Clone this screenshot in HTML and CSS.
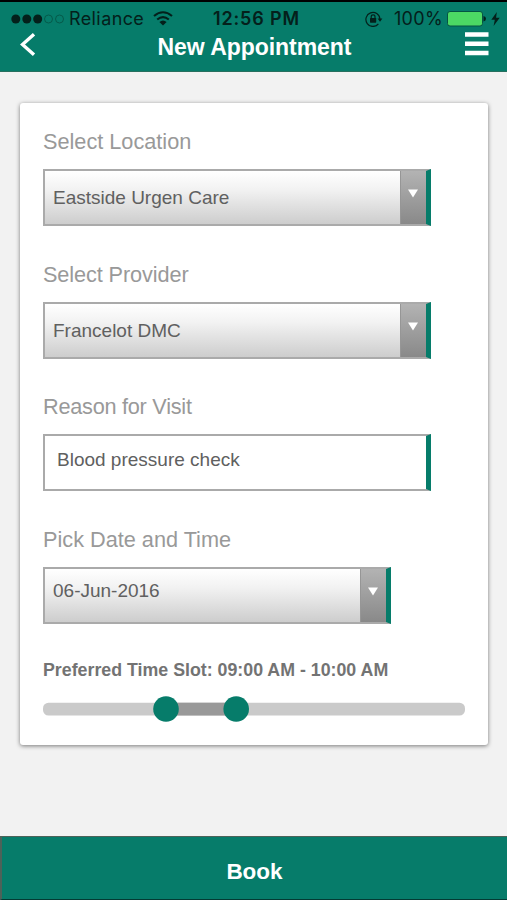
FILE: index.html
```html
<!DOCTYPE html>
<html lang="en">
<head>
<meta charset="utf-8">
<title>New Appointment</title>
<link rel="stylesheet" href="styles.css">
</head>
<body>
<div class="app">
  <header class="header">
    <div class="status">
      <div class="status-left">
        <svg class="signal" width="54" height="12" viewBox="0 0 54 12"><circle cx="4.8" cy="6" r="4.5"/><circle cx="15.8" cy="6" r="4.5"/><circle cx="26.7" cy="6" r="4.5"/><g class="signal-off"><circle cx="37.5" cy="6" r="4"/><circle cx="48.5" cy="6" r="4"/></g></svg>
        <span class="carrier">Reliance</span>
        <svg class="wifi" width="20" height="15" viewBox="0 0 20 15"><g fill="none" stroke="#04201b" stroke-width="2.1"><path d="M1 5Q10-2.5 19 5"/><path d="M4.2 8.5Q10 3.7 15.8 8.5"/></g><path d="M6.4 11Q10 7.8 13.6 11L10 14.5Z" fill="#04201b"/></svg>
      </div>
      <span class="clock">12:56 PM</span>
      <div class="status-right">
        <svg class="lock" width="18" height="16" viewBox="0 0 18 16"><path d="M13.4 12.8A7 7 0 1 1 14.9 8" fill="none" stroke="#04201b" stroke-width="1.2"/><path d="M12.6 7.5H17.4L15 10.8Z"/><rect x="5" y="7" width="6.2" height="4.7" rx=".6"/><path d="M6.2 7.4V5.8a1.9 1.9 0 0 1 3.8 0V7.4" fill="none" stroke="#04201b" stroke-width="1.2"/></svg>
        <span class="percent">100%</span>
        <svg class="battery" width="39" height="16" viewBox="0 0 39 16"><rect x=".5" y=".5" width="35" height="14.5" rx="2.5" fill="#4cd964" stroke="#055443"/><path d="M36.5 5Q39 5.5 39 7.8T36.5 10.5Z"/></svg>
        <svg class="bolt" width="9" height="14" viewBox="0 0 9 14"><path d="M5.8 0L.3 7.8H3.8L2.6 14 8.7 5.8H5.1Z"/></svg>
      </div>
    </div>
    <div class="nav">
      <svg class="back" width="16" height="23" viewBox="0 0 16 23"><path d="M14 1.3L2.5 11.5 14 21.7" fill="none" stroke="#fff" stroke-width="3.4"/></svg>
      <h1 class="title">New Appointment</h1>
      <svg class="menu" width="24" height="24" viewBox="0 0 24 24"><path d="M0 2.5H23.5M0 11.7H23.5M0 21H23.5" stroke="#fff" stroke-width="4.6"/></svg>
    </div>
  </header>
  <main class="main">
    <form class="card">
      <div class="field">
        <label class="label location">Select Location</label>
        <div class="control select"><span class="value">Eastside Urgen Care</span><span class="arrow"><svg width="10" height="9" viewBox="0 0 10 9"><path d="M0 .5H10L5 8.5Z"/></svg></span></div>
      </div>
      <div class="field">
        <label class="label provider">Select Provider</label>
        <div class="control select"><span class="value">Francelot DMC</span><span class="arrow"><svg width="10" height="9" viewBox="0 0 10 9"><path d="M0 .5H10L5 8.5Z"/></svg></span></div>
      </div>
      <div class="field">
        <label class="label reason">Reason for Visit</label>
        <div class="control text"><span class="value">Blood pressure check</span></div>
      </div>
      <div class="field">
        <label class="label datetime">Pick Date and Time</label>
        <div class="control select date"><span class="value">06-Jun-2016</span><span class="arrow"><svg width="10" height="9" viewBox="0 0 10 9"><path d="M0 .5H10L5 8.5Z"/></svg></span></div>
      </div>
      <p class="slot">Preferred Time Slot: 09:00 AM - 10:00 AM</p>
      <svg class="slider" width="422" height="26" viewBox="0 0 422 26"><rect y="6.7" width="422" height="12.8" rx="5.5" fill="#cacaca"/><rect x="123" y="6.7" width="70" height="12.8" fill="#999"/><circle cx="123" cy="13" r="12.8"/><circle cx="193.2" cy="13" r="12.8"/></svg>
    </form>
  </main>
  <button class="book">Book</button>
</div>
</body>
</html>
```

FILE: styles.css
```css
* { box-sizing: border-box; }
body { margin: 0; font-family: "Liberation Sans", Arial, sans-serif; }
.app { height: 900px; display: flex; flex-direction: column; background: #f2f2f2; overflow: hidden; }
.header { height: 72px; flex: none; background: #067c6a; border-top: 2px solid #000; border-bottom: 1px solid #28705f; }
.status { height: 31px; display: grid; grid-template-columns: 213px 94px 1fr; align-items: center; padding-top: 2px; font-family: Inter, sans-serif; font-size: 18px; color: #04201b; fill: #04201b; line-height: 29px; }
.status svg { flex: none; }
.status-left, .status-right { display: flex; align-items: center; }
.status-left { padding-left: 11px; }
.signal { margin-right: 4px; }
.signal-off { fill: none; stroke: #055a4a; stroke-width: 1; }
.carrier { width: 84px; letter-spacing: .4px; }
.clock { font-weight: 600; letter-spacing: .85px; white-space: nowrap; }
.status-right { padding-left: 58px; }
.lock { margin-right: 11px; }
.percent { width: 53px; letter-spacing: .3px; }
.bolt { margin-left: 5px; }
.nav { height: 38px; display: flex; justify-content: space-between; align-items: flex-start; padding: 0 18px 0 20px; }
.title { margin: 2px 0 0; color: #fff; font-size: 23px; line-height: 24px; letter-spacing: -.05px; }
.back { margin-right: 8px; }
.menu { margin-top: -1px; }
.main { flex: 1; padding: 31px 19px 0 20px; }
.card { height: 642px; padding: 24px 23px 0; background: #fff; border-radius: 3px; box-shadow: 0 1px 4px rgba(0, 0, 0, .5); }
.field { height: 132.7px; }
.label { display: block; height: 42px; line-height: 29px; font-size: 21.7px; color: #999; white-space: nowrap; }
.provider { letter-spacing: -.1px; }
.reason { letter-spacing: -.25px; }
.control { width: 388px; height: 57px; display: flex; justify-content: space-between; border: 2px solid #aaa; border-right: 5px solid #067c6a; font-size: 19px; color: #606060; }
.value { padding-left: 8px; line-height: 53px; white-space: nowrap; }
.select { background: linear-gradient(#fff, #f2f2f2 35%, #cdcdcd); }
.arrow { width: 26px; display: flex; justify-content: center; padding: 18px 2px 0 0; border-left: 1px solid #969696; background: linear-gradient(#b3b3b3, #898989); fill: #fff; }
.text .value { padding-left: 12px; line-height: 48px; }
.date { width: 348px; }
.date .value { line-height: 43px; }
.slot { margin: 0; height: 38px; line-height: 24px; font-size: 17.8px; font-weight: bold; color: #737373; white-space: nowrap; }
.slider { display: block; fill: #067c6a; }
.book { height: 64px; flex: none; border: solid #4d6259; border-width: 1px 0 0 2px; border-bottom: 1px solid #033b34; padding: 8px 0 0; background: #067c6a; color: #fff; font: bold 22.5px "Liberation Sans", Arial, sans-serif; }
```
